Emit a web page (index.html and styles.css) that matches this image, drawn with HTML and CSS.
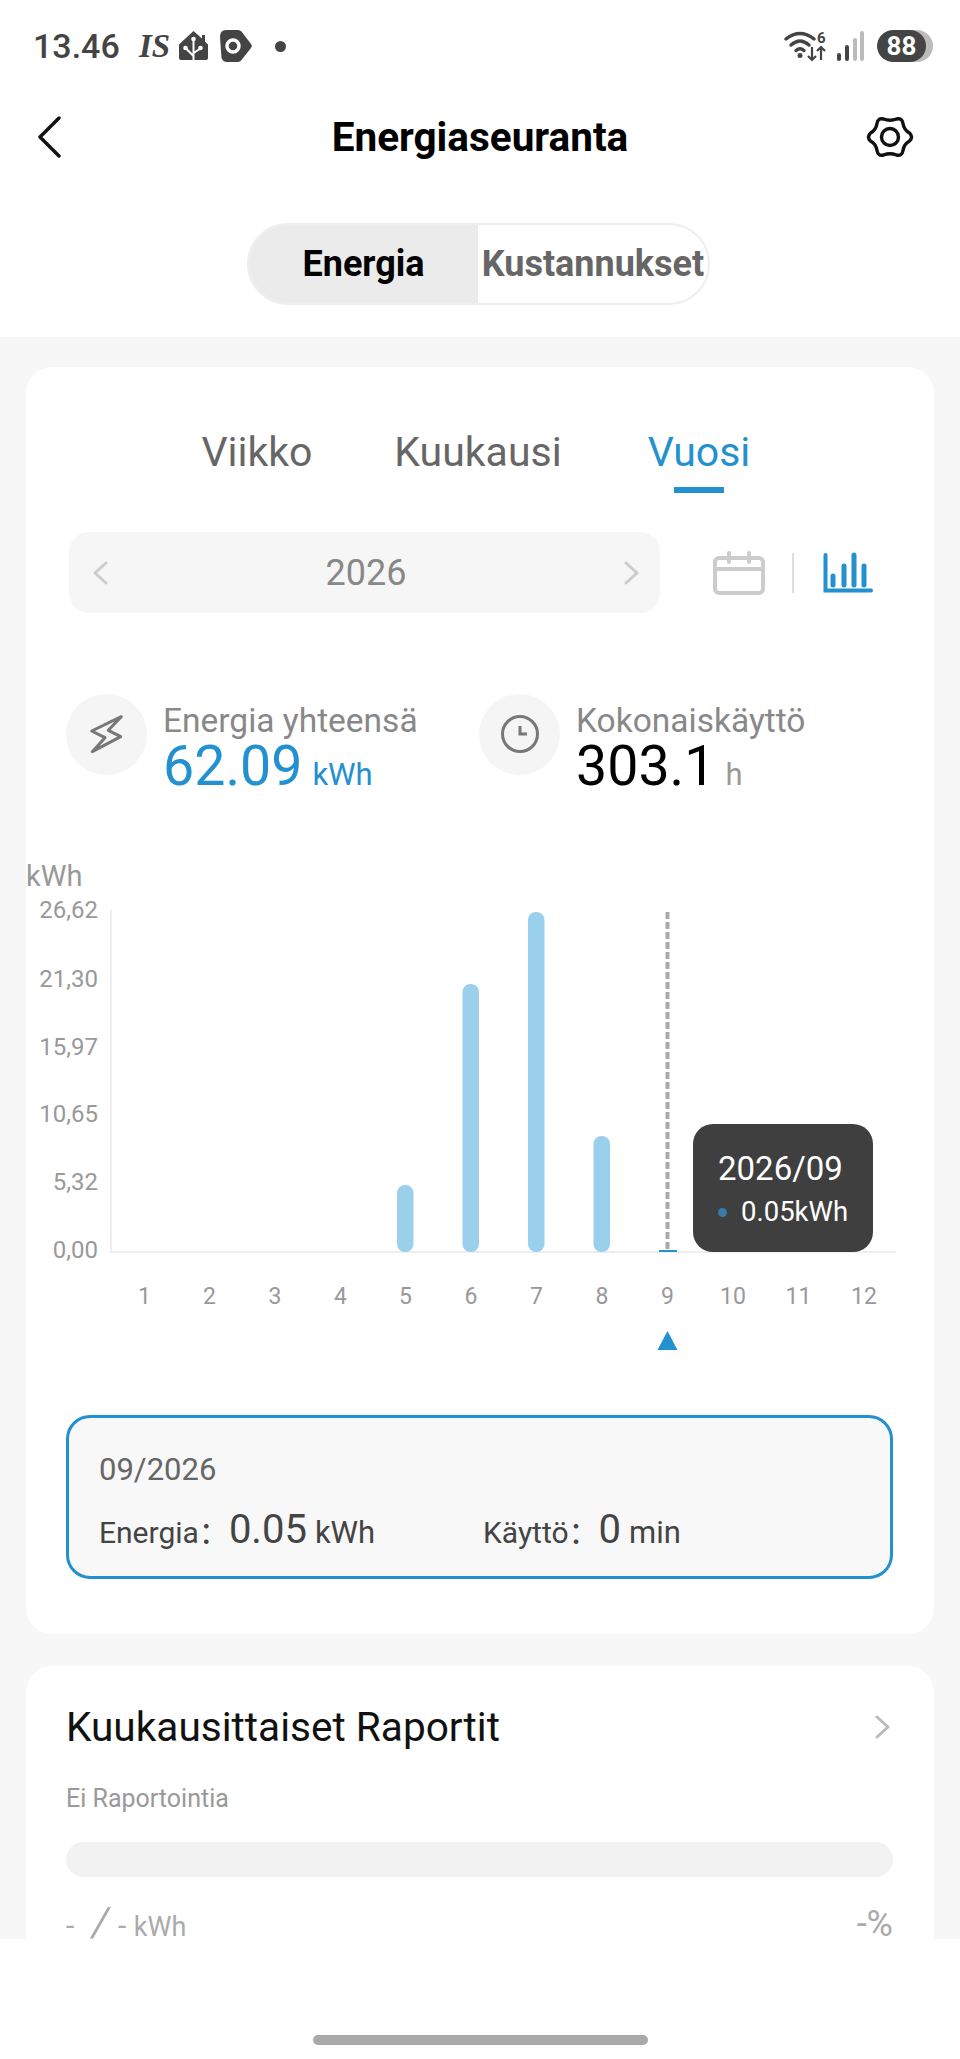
FILE: index.html
```html
<!DOCTYPE html>
<html lang="fi">
<head>
    <meta charset="UTF-8">
    <meta name="viewport" content="width=device-width, initial-scale=1.0">
    <title>Energiaseuranta</title>
    <link rel="stylesheet" href="styles.css">
</head>
<body>
    <div class="app">
        <div class="statusbar">
            <div class="status-left">
                <span class="time">13.46</span>
                <span class="is-logo">IS</span>
                <svg class="home-icon" viewBox="0 0 30 30">
                    <path d="M14.500 0 23 7.500V4H26V10.500L29 13.500V27a2 2 0 0 1-2 2H2a2 2 0 0 1-2-2V13.500Z" fill="#444"/>
                    <path d="M14.500 29V8M14.500 25 7 17.500M14.500 22 21.500 17.500" stroke="#fff" stroke-width="2" fill="none"/>
                    <circle cx="14.500" cy="8" r="2.300" fill="#fff"/>
                    <circle cx="6.500" cy="17" r="2.300" fill="#fff"/>
                    <circle cx="21.500" cy="17" r="2.300" fill="#fff"/>
                </svg>
                <svg class="tag-icon" viewBox="0 0 32 32">
                    <path d="M6 0H18Q20 0 21.500 1.500L31 14Q32.500 16 31 18L21.500 30Q20 32 18 32H7Q3 32 1.500 28L0 7Q0 0 6 0Z" fill="#444"/>
                    <circle cx="13" cy="16" r="6" fill="none" stroke="#fff" stroke-width="3.500"/>
                </svg>
                <span class="status-dot"></span>
            </div>
            <div class="status-right">
                <svg class="wifi-icon" viewBox="0 0 44 32">
                    <g fill="none" stroke="#444" stroke-linecap="round" stroke-width="3.400">
                        <path d="M2 9Q16-2 30 9"/>
                        <path d="M7 15Q16 7 25 15"/>
                        <path d="M12 20.500Q16 17 20 20.500"/>
                    </g>
                    <circle cx="16" cy="25.500" r="2.500" fill="#444"/>
                    <g fill="none" stroke="#444" stroke-width="2.200">
                        <path d="M28 17V30M24 26 28 30 32 26"/>
                        <path d="M37 30V17M33 21 37 17 41 21"/>
                    </g>
                    <text x="33" y="13" class="wifi-six">6</text>
                </svg>
                <svg class="signal-icon" viewBox="0 0 28 30">
                    <rect x="1" y="22" width="4" height="8" rx="2" fill="#444"/>
                    <rect x="9" y="14" width="4" height="16" rx="2" fill="#444"/>
                    <rect x="17" y="7" width="4" height="23" rx="2" fill="#bbb"/>
                    <rect x="24" y="0" width="4" height="30" rx="2" fill="#bbb"/>
                </svg>
                <div class="battery"><span class="battery-level">88</span></div>
            </div>
        </div>

        <header class="topbar">
            <svg class="back-icon" viewBox="0 0 24 42">
                <path d="M22 2 3 21 22 40" fill="none" stroke="#111" stroke-width="3.400" stroke-linecap="round" stroke-linejoin="round"/>
            </svg>
            <h1>Energiaseuranta</h1>
            <svg class="gear-icon" viewBox="0 0 48 48">
                <path d="M43.500 20Q47.500 24 43.500 28Q38 31 37 37.500Q36 43.500 30.500 42Q24 39.500 17.500 42Q12 43.500 11 37.500Q10 31 4.500 28Q.5 24 4.500 20Q10 17 11 10.500Q12 4.500 17.500 6Q24 8.500 30.500 6Q36 4.500 37 10.500Q38 17 43.500 20Z" fill="none" stroke="#111" stroke-width="3.400" stroke-linejoin="round"/>
                <circle cx="24" cy="24" r="8.500" fill="none" stroke="#111" stroke-width="3.400"/>
            </svg>
        </header>

        <div class="toggle-row">
            <div class="toggle">
                <span class="toggle-item active">Energia</span>
                <span class="toggle-item">Kustannukset</span>
            </div>
        </div>

        <main class="content">
            <section class="card energy-card">
                <div class="tabs">
                    <span class="tab">Viikko</span>
                    <span class="tab">Kuukausi</span>
                    <span class="tab active">Vuosi</span>
                </div>

                <div class="date-row">
                    <div class="date-picker">
                        <svg class="date-arrow" viewBox="0 0 16 24"><path d="M14 2 3 12 14 22" fill="none" stroke="#ccc" stroke-width="3" stroke-linecap="round" stroke-linejoin="round"/></svg>
                        <span class="date-value">2026</span>
                        <svg class="date-arrow" viewBox="0 0 16 24"><path d="M2 2 13 12 2 22" fill="none" stroke="#ccc" stroke-width="3" stroke-linecap="round" stroke-linejoin="round"/></svg>
                    </div>
                    <div class="view-switch">
                        <svg class="calendar-icon" viewBox="0 0 52 44">
                            <g fill="none" stroke="#ccc" stroke-width="4" stroke-linecap="round" stroke-linejoin="round">
                                <rect x="2" y="7" width="48" height="35" rx="4"/>
                                <path d="M2 18H50M16 2V11M36 2V11"/>
                            </g>
                        </svg>
                        <span class="view-divider"></span>
                        <svg class="bars-icon" viewBox="0 0 50 42">
                            <g fill="none" stroke="#2390cf" stroke-linecap="round">
                                <path d="M2.500 3V38.500H48" stroke-width="4"/>
                                <path d="M10 24V33M21 14V33M31 3V33M41 14V33" stroke-width="5"/>
                            </g>
                        </svg>
                    </div>
                </div>

                <div class="stats">
                    <div class="stat stat-energy">
                        <div class="stat-icon">
                            <svg viewBox="0 0 81 81"><path d="M55.300 22.700 25.700 37 39 43.700 26.300 57.700 54.700 42.700 42.300 36.300Z" fill="none" stroke="#777" stroke-width="3" stroke-linejoin="round"/></svg>
                        </div>
                        <div class="stat-text">
                            <div class="stat-label">Energia yhteensä</div>
                            <div class="stat-value blue">62.09<small>kWh</small></div>
                        </div>
                    </div>
                    <div class="stat">
                        <div class="stat-icon">
                            <svg viewBox="0 0 81 81">
                                <circle cx="41" cy="40" r="17.500" fill="none" stroke="#777" stroke-width="3"/>
                                <path d="M41 32V40H48" fill="none" stroke="#777" stroke-width="3"/>
                            </svg>
                        </div>
                        <div class="stat-text">
                            <div class="stat-label">Kokonaiskäyttö</div>
                            <div class="stat-value">303.1<small>h</small></div>
                        </div>
                    </div>
                </div>

                <div class="chart">
                    <svg class="chart-svg" viewBox="0 0 908 500">
                        <text x="0" y="40" class="unit-label">kWh</text>
                        <g class="y-labels">
                            <text x="72" y="72">26,62</text>
                            <text x="72" y="140.500">21,30</text>
                            <text x="72" y="208.500">15,97</text>
                            <text x="72" y="276">10,65</text>
                            <text x="72" y="344">5,32</text>
                            <text x="72" y="412">0,00</text>
                        </g>
                        <path d="M85 64V406H870" fill="none" stroke="#eee" stroke-width="2"/>
                        <g fill="#9bd0ec">
                            <rect x="371" y="339" width="16.500" height="67" rx="8"/>
                            <rect x="436.500" y="138" width="16.500" height="268" rx="8"/>
                            <rect x="502" y="66" width="16.500" height="340" rx="8"/>
                            <rect x="567.500" y="290" width="16.500" height="116" rx="8"/>
                        </g>
                        <rect x="633" y="404" width="18" height="2" fill="#2390cf"/>
                        <path d="M641.500 66V404" stroke="#aaa" stroke-width="4" stroke-dasharray="7 3"/>
                        <g class="x-labels">
                            <text x="118.500" y="458">1</text>
                            <text x="183.500" y="458">2</text>
                            <text x="249" y="458">3</text>
                            <text x="314.500" y="458">4</text>
                            <text x="379.500" y="458">5</text>
                            <text x="445" y="458">6</text>
                            <text x="510.500" y="458">7</text>
                            <text x="576" y="458">8</text>
                            <text x="641.500" y="458">9</text>
                            <text x="707" y="458">10</text>
                            <text x="772.500" y="458">11</text>
                            <text x="838" y="458">12</text>
                        </g>
                        <path d="M641.500 485 651.500 504H631.500Z" fill="#2390cf"/>
                    </svg>
                    <div class="chart-tooltip">
                        <div class="tooltip-date">2026/09</div>
                        <div class="tooltip-row"><span class="tooltip-dot"></span>0.05kWh</div>
                    </div>
                </div>

                <div class="detail-box">
                    <div class="detail-date">09/2026</div>
                    <div class="detail-row">
                        <div class="detail-item">Energia：<b>0.05</b><small>kWh</small></div>
                        <div class="detail-item">Käyttö：<b>0</b><small>min</small></div>
                    </div>
                </div>
            </section>

            <section class="card report-card">
                <div class="report-head">
                    <h2>Kuukausittaiset Raportit</h2>
                    <svg class="report-arrow" viewBox="0 0 16 24"><path d="M2 2 13 12 2 22" fill="none" stroke="#bbb" stroke-width="3" stroke-linecap="round" stroke-linejoin="round"/></svg>
                </div>
                <p class="report-note">Ei Raportointia</p>
                <div class="progress"></div>
                <div class="report-foot">
                    <span>- <i class="slash">/</i> - <small>kWh</small></span>
                    <span class="report-percent">-%</span>
                </div>
            </section>
        </main>

        <div class="navbar">
            <span class="home-bar"></span>
        </div>
    </div>
</body>
</html>
```

FILE: styles.css
```css
* {
    box-sizing: border-box;
}
body {
    margin: 0;
    font-family: Roboto, "Noto Sans CJK SC", sans-serif;
    background-color: #fff;
    color: #333;
}
.app {
    height: 2059px;
    display: flex;
    flex-direction: column;
    overflow: hidden;
}

/* status bar */
.statusbar {
    height: 92px;
    flex: none;
    display: flex;
    justify-content: space-between;
    align-items: center;
    padding: 0 27px 0 33px;
}
.status-left, .status-right {
    display: flex;
    align-items: center;
}
.time {
    font-size: 34px;
    font-weight: 500;
    color: #444;
    width: 106px;
}
.is-logo {
    font-family: "Liberation Serif", serif;
    font-style: italic;
    font-weight: 700;
    font-size: 33px;
    color: #444;
    width: 40px;
}
.home-icon {
    width: 30px;
    height: 30px;
    margin-right: 11px;
}
.tag-icon {
    width: 32px;
    height: 32px;
    margin-right: 23px;
}
.status-dot {
    width: 11px;
    height: 11px;
    border-radius: 50%;
    background-color: #444;
}
.wifi-icon {
    width: 44px;
    height: 32px;
    margin-right: 8px;
}
.wifi-six {
    font-size: 15px;
    font-weight: 700;
    fill: #444;
}
.signal-icon {
    width: 28px;
    height: 30px;
    margin-right: 13px;
}
.battery {
    width: 56px;
    height: 32px;
    border-radius: 16px;
    background-color: #bbb;
    overflow: hidden;
}
.battery-level {
    display: block;
    width: 49px;
    height: 32px;
    border-radius: 16px;
    background-color: #444;
    color: #fff;
    font-size: 26px;
    font-weight: 700;
    line-height: 32px;
    text-align: center;
}

/* header */
.topbar {
    height: 90px;
    flex: none;
    display: grid;
    grid-template-columns: 1fr auto 1fr;
    align-items: center;
    padding: 0 46px;
}
.topbar h1 {
    margin: 0;
    font-size: 40.500px;
    font-weight: 700;
    color: #000;
}
.back-icon {
    width: 24px;
    height: 42px;
    margin-left: -9px;
}
.gear-icon {
    width: 48px;
    height: 48px;
    justify-self: end;
}
.toggle-row {
    height: 155px;
    flex: none;
    padding: 41px 3px 0 0;
    display: flex;
    justify-content: center;
}
.toggle {
    width: 463px;
    height: 82px;
    display: flex;
    border: 2px solid #eee;
    border-radius: 41px;
    overflow: hidden;
}
.toggle-item {
    flex: 1;
    display: flex;
    justify-content: center;
    align-items: center;
    font-size: 36px;
    font-weight: 700;
    color: #666;
    white-space: nowrap;
}
.toggle-item.active {
    flex: none;
    width: 229px;
    background-color: #ebebeb;
    color: #000;
}

/* cards */
.content {
    flex: 1;
    min-height: 0;
    overflow: hidden;
    background-color: #f7f7f7;
    padding: 30px 26px 0;
}
.card {
    background-color: #fff;
    border-radius: 26px;
    padding: 0 41px 0 40px;
}
.energy-card {
    height: 1267px;
    margin-bottom: 32px;
}
.tabs {
    display: grid;
    grid-template-columns: repeat(3, 221px);
    justify-content: center;
    padding: 62px 3px 0 0;
}
.tab {
    font-size: 41px;
    line-height: 47px;
    padding-bottom: 17px;
    color: #666;
    text-align: center;
    position: relative;
}
.tab.active {
    color: #2390cf;
}
.tab.active::after {
    content: "";
    position: absolute;
    left: 50%;
    margin-left: -25px;
    width: 50px;
    bottom: 0;
    height: 6px;
    background-color: #2390cf;
}
.date-row {
    display: flex;
    align-items: center;
    margin: 39px 0 0 3px;
}
.date-picker {
    width: 591px;
    height: 81px;
    background-color: #f6f6f6;
    border-radius: 20px;
    display: flex;
    justify-content: space-between;
    align-items: center;
    padding: 0 20px 0 23px;
}
.date-arrow {
    width: 16px;
    height: 24px;
}
.date-value {
    font-size: 36px;
    color: #888;
}
.view-switch {
    display: flex;
    align-items: center;
    margin-left: 53px;
}
.calendar-icon {
    width: 52px;
    height: 44px;
}
.view-divider {
    width: 2px;
    height: 40px;
    background-color: #ddd;
    margin: 0 29px 0 27px;
}
.bars-icon {
    width: 50px;
    height: 42px;
}
.stats {
    display: flex;
    margin-top: 81px;
}
.stat {
    display: flex;
    gap: 16px;
}
.stat-energy {
    width: 413px;
}
.stat-icon {
    width: 81px;
    height: 81px;
    border-radius: 50%;
    background-color: #f5f5f5;
}
.stat-icon svg {
    display: block;
}
.stat-label {
    font-size: 33.500px;
    line-height: 38px;
    margin-top: 8px;
    color: #888;
}
.stat-value {
    font-size: 55.500px;
    line-height: 54px;
    color: #000;
}
.stat-value.blue {
    color: #2390cf;
}
.stat-value small {
    font-size: 31px;
    margin-left: 10px;
    color: #999;
}
.stat-value.blue small {
    color: #2390cf;
}
.chart {
    position: relative;
    margin: 44px -41px 0 -40px;
    height: 506px;
}
.chart-svg {
    display: block;
    width: 908px;
    height: 500px;
    overflow: visible;
}
.unit-label {
    font-size: 29px;
    fill: #999;
}
.y-labels text {
    font-size: 24px;
    fill: #999;
    text-anchor: end;
}
.x-labels text {
    font-size: 23px;
    fill: #999;
    text-anchor: middle;
}
.chart-tooltip {
    position: absolute;
    left: 667px;
    top: 278px;
    width: 180px;
    height: 128px;
    background-color: #3f3f3f;
    border-radius: 20px;
    color: #fff;
    padding: 25px 0 0 25px;
}
.tooltip-date {
    font-size: 33px;
    line-height: 40px;
}
.tooltip-row {
    font-size: 27.500px;
    line-height: 34px;
    margin-top: 6px;
    display: flex;
    align-items: center;
}
.tooltip-dot {
    width: 9px;
    height: 9px;
    border-radius: 50%;
    background-color: #3a7aa8;
    margin-right: 14px;
}
.detail-box {
    height: 164px;
    margin-top: 63px;
    border: 3px solid #2390cf;
    border-radius: 24px;
    background-color: #f8f8f8;
    padding: 34px 30px 0;
}
.detail-date {
    font-size: 31px;
    line-height: 36px;
    color: #666;
}
.detail-row {
    display: flex;
    margin-top: 18px;
}
.detail-item {
    flex: none;
    width: 384px;
    font-size: 30px;
    line-height: 48px;
    color: #444;
    white-space: nowrap;
}
.detail-item + .detail-item {
    width: auto;
}
.detail-item b {
    font-size: 40px;
    font-weight: 400;
}
.detail-item small {
    font-size: 31px;
    margin-left: 8px;
}
.report-card {
    height: 400px;
}
.report-head {
    display: flex;
    justify-content: space-between;
    align-items: center;
    padding: 37px 2px 0 0;
}
.report-head h2 {
    margin: 0;
    font-size: 40.600px;
    font-weight: 400;
    line-height: 48px;
    color: #111;
}
.report-arrow {
    width: 16px;
    height: 24px;
}
.report-note {
    margin: 33px 0 0;
    font-size: 25px;
    line-height: 30px;
    color: #999;
}
.progress {
    height: 35px;
    margin-top: 28px;
    border-radius: 18px;
    background-color: #f2f2f2;
}
.report-foot {
    display: flex;
    justify-content: space-between;
    align-items: baseline;
    margin-top: 27px;
    font-size: 30px;
    line-height: 40px;
    color: #aaa;
}
.report-foot small {
    font-size: 27px;
}
.report-percent {
    font-size: 36px;
}
.slash {
    display: inline-block;
    font-style: normal;
    font-size: 40px;
    font-weight: 300;
    line-height: 30px;
    transform: scaleX(1.5);
    margin: 0 2px 0 11px;
}
.navbar {
    height: 120px;
    flex: none;
    background-color: #fff;
    display: flex;
    justify-content: center;
    padding-top: 96px;
}
.home-bar {
    width: 335px;
    height: 10px;
    border-radius: 5px;
    background-color: #aaa;
}
```
